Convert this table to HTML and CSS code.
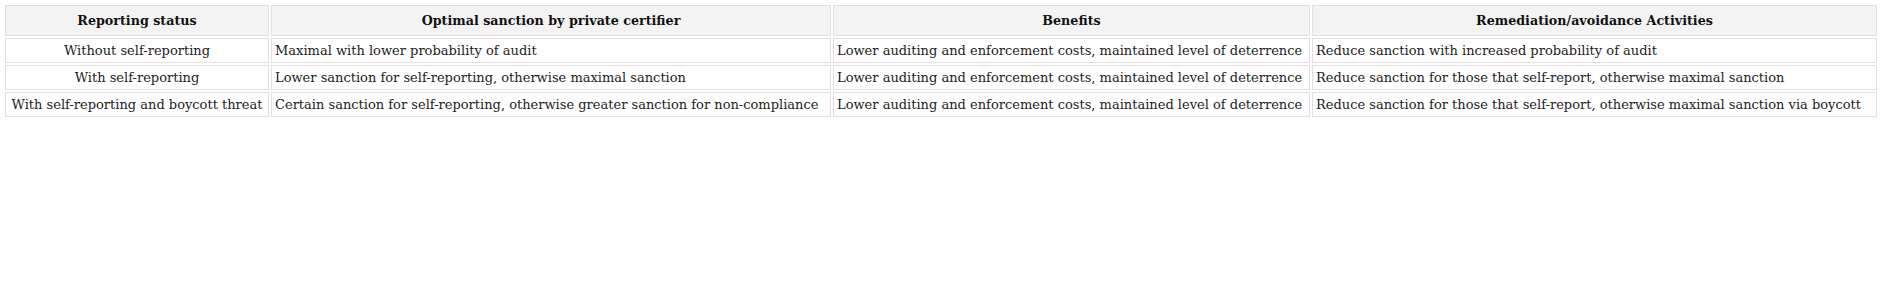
FILE: index.html
```html
<!DOCTYPE html>
<html>
<head>
<meta charset="utf-8">
<link rel="stylesheet" href="styles.css">
</head>
<body>
<table class="grid">
  <colgroup>
    <col class="c1"><col class="c2"><col class="c3"><col class="c4">
  </colgroup>
  <thead>
    <tr>
      <th>Reporting status</th>
      <th>Optimal sanction by private certifier</th>
      <th>Benefits</th>
      <th>Remediation/avoidance Activities</th>
    </tr>
  </thead>
  <tbody>
    <tr>
      <td class="status">Without self-reporting</td>
      <td>Maximal with lower probability of audit</td>
      <td>Lower auditing and enforcement costs, maintained level of deterrence</td>
      <td>Reduce sanction with increased probability of audit</td>
    </tr>
    <tr>
      <td class="status">With self-reporting</td>
      <td>Lower sanction for self-reporting, otherwise maximal sanction</td>
      <td>Lower auditing and enforcement costs, maintained level of deterrence</td>
      <td>Reduce sanction for those that self-report, otherwise maximal sanction</td>
    </tr>
    <tr>
      <td class="status">With self-reporting and boycott threat</td>
      <td>Certain sanction for self-reporting, otherwise greater sanction for non-compliance</td>
      <td>Lower auditing and enforcement costs, maintained level of deterrence</td>
      <td>Reduce sanction for those that self-report, otherwise maximal sanction via boycott</td>
    </tr>
  </tbody>
</table>
</body>
</html>
```
FILE: styles.css
```css
html, body {
  margin: 0;
  padding: 0;
  background: #ffffff;
}
body {
  font-family: "DejaVu Serif", serif;
  font-size: 13px;
  color: #222222;
}
.grid {
  margin: 3px 0 0 3px;
  border-collapse: separate;
  border-spacing: 2px;
  table-layout: fixed;
  width: 1876px;
}
.c1 { width: 264px; }
.c2 { width: 560px; }
.c3 { width: 477px; }
.c4 { width: 565px; }
.grid th,
.grid td {
  border: 1px solid #e6dde2;
  padding: 0 3px;
  white-space: nowrap;
}
.grid th {
  background: #f3f3f3;
  height: 29px;
  font-size: 12.7px;
  font-weight: bold;
  text-align: center;
  color: #111111;
}
.grid td {
  height: 23px;
  text-align: left;
}
.grid td.status {
  text-align: center;
}
```
